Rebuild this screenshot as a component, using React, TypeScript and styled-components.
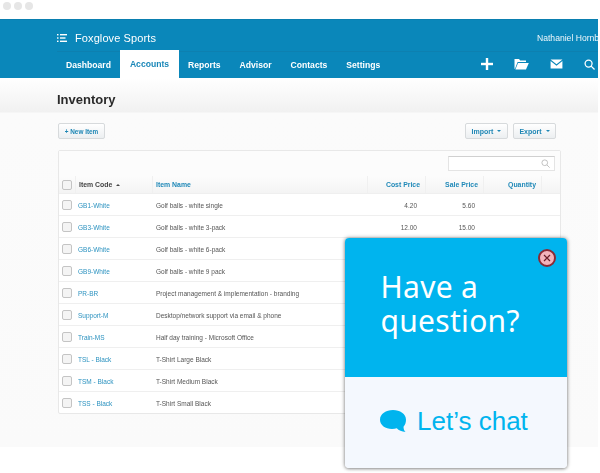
import React from "react";
import styled, { createGlobalStyle } from "styled-components";

const Global = createGlobalStyle`
  html, body { margin: 0; padding: 0; background: #fff; overflow: hidden; }
  body { font-family: "Liberation Sans", Arial, sans-serif; }
`;
const Stage = styled.div`position: relative; width: 600px; height: 473px; overflow: hidden; background: #fff;`;
const Page = styled.div`filter: blur(0.45px); width: 598px;`;
const WindowBar = styled.div`height: 19px; display: flex; gap: 3px; padding: 2px 0 0 3px; box-sizing: border-box; background: #fff;`;
const Dot = styled.span`width: 8px; height: 8px; border-radius: 50%; background: #e6e6e6;`;
const Header = styled.header`background: #0a87ba; height: 59px; display: flex; flex-direction: column; border-top: 1px solid #0a7fb0; box-sizing: border-box;`;
const BrandRow = styled.div`height: 33px; margin-left: 57px; display: flex; align-items: center; justify-content: space-between; border-bottom: 1px solid #0d80b0; box-sizing: border-box; padding-top: 5px; white-space: nowrap;`;
const Brand = styled.div`display: flex; align-items: center; gap: 8px; color: #fff; font-size: 11px; font-weight: 400; letter-spacing: 0.1px;`;
const User = styled.div`color: #eef7fb; font-size: 8.6px; width: 61px;`;
const NavRow = styled.nav`height: 26px; display: flex; align-items: stretch; padding-left: 56.5px;`;
const NavItem = styled.a<{ $active?: boolean }>`
  display: flex; align-items: center; justify-content: center; font-size: 8.6px; font-weight: 700; padding: 0 9.5px;
  color: ${p => p.$active ? "#1a87b8" : "#fff"}; background: ${p => p.$active ? "#fff" : "transparent"};
  margin-top: ${p => p.$active ? "-2px" : "0"};
`;
const NavIcons = styled.div`margin-left: auto; display: flex; align-items: center; color: #fff; padding-right: 3px; gap: 21px; margin-top: -2px;`;
const Main = styled.main`height: 369px; background: linear-gradient(#fff, #f1f1f1 34px, #fbfbfb 35px, #fafafa); padding: 0 37px 0 57px; box-sizing: border-box;`;
const Title = styled.h1`margin: 0; height: 37px; padding-top: 14px; box-sizing: border-box; font-size: 13px; font-weight: 700; line-height: 16px; color: #2a2a2a;`;
const Actions = styled.div`display: flex; padding: 8px 5px 0 1px; gap: 5px; height: 35px; box-sizing: border-box; align-items: flex-start;`;
const Btn = styled.button<{ $push?: boolean }>`
  font: 700 7px "Liberation Sans", sans-serif; height: 16px; padding: 0; color: #1f87b5; display: flex; align-items: center; justify-content: center; gap: 3px;
  width: 43px; border: 1px solid #d7dadc; border-radius: 2px; background: linear-gradient(#fff, #eceff1);
  margin-left: ${p => p.$push ? "auto" : "0"};
`;
const NewBtn = styled(Btn)`width: 47px; font-size: 6.4px;`;
const Caret = styled.i`border: 2px solid transparent; border-top: 2.5px solid #1f87b5; border-bottom: 0; display: inline-block; margin-left: 1px;`;
const Card = styled.section`width: 503px; background: #fff; border: 1px solid #e8e8e8; border-radius: 2px; box-sizing: border-box; margin-left: 1px;`;
const SearchRow = styled.div`height: 25px; background: #fcfcfc; display: flex; justify-content: flex-end; padding: 5px 5px 0 0; box-sizing: border-box;`;
const SearchBox = styled.div`width: 107px; height: 15px; border: 1px solid #e4e4e4; border-top-color: #d0d0d0; background: #fff; box-sizing: border-box; display: flex; align-items: center; justify-content: flex-end; padding-right: 4px; color: #c0c0c0;`;
const Row = styled.div<{ $head?: boolean }>`
  display: grid; grid-template-columns: 16px 77px 215px 58px 58px 58px 1fr; height: ${p => p.$head ? 18 : 22}px;
  border-bottom: 1px solid #efefef; box-sizing: border-box; align-items: center; font-size: ${p => p.$head ? 6.9 : 6.5}px; color: #555;
  ${p => p.$head ? "background: linear-gradient(#fcfcfc,#f4f4f4); font-weight:700;" : "padding-top:1px;"}
  &:last-child { border-bottom: 0; height: 21px; }
`;
const CheckCell = styled.div`display: flex; justify-content: center;`;
const Check = styled.span`width: 8px; height: 8px; border: 1px solid #c4c4c4; border-radius: 2px; background: #f4f4f4;`;
const CodeLink = styled.a`color: #2d93c0; padding-left: 3px;`;
const HeadCell = styled.div<{ $right?: boolean; $sorted?: boolean }>`
  height: 100%; display: flex; align-items: center; border-left: 1px solid #f0f0f0; box-sizing: border-box;
  padding: 0 ${p => p.$right ? 5 : 3}px 0 3px; color: ${p => p.$sorted ? "#444" : "#2089b8"}; justify-content: ${p => p.$right ? "flex-end" : "flex-start"};
`;
const Up = styled.i`border: 2px solid transparent; border-bottom: 2.5px solid #444; border-top: 0; margin-left: 4px;`;
const Name = styled.div`padding-left: 4px; white-space: nowrap;`;
const Num = styled.div`text-align: right; padding-right: 8px;`;
const Popup = styled.aside`position: absolute; left: 345px; top: 238px; width: 222px; height: 230px; border-radius: 4px; overflow: hidden; box-shadow: 0 0 4px rgba(0,0,0,.4), 0 1px 3px rgba(0,0,0,.25); display: flex; flex-direction: column;`;
const PopTop = styled.div`position: relative; height: 139px; background: #00b4ee; color: #fff; padding: 32px 0 0 35.5px; box-sizing: border-box;`;
const Question = styled.div`font-family: "Noto Sans", sans-serif; font-weight: 400; font-size: 30px; line-height: 34px; letter-spacing: 0.3px;`;
const Close = styled.button`position: absolute; top: 11px; right: 11px; width: 18px; height: 18px; padding: 0; border-radius: 50%; background: #f3b3bb; border: 2px solid #8a2a35; display: flex; align-items: center; justify-content: center; box-sizing: border-box; color: #6b1f2a;`;
const PopBottom = styled.div`flex: 1; background: #f4f8fe; color: #00b4ee; display: flex; align-items: center; gap: 11px; padding: 0 0 2px 35px; font-size: 26px; font-weight: 400;`;

const rows = [
  ["GB1-White", "Golf balls - white single", "4.20", "5.60"],
  ["GB3-White", "Golf balls - white 3-pack", "12.00", "15.00"],
  ["GB6-White", "Golf balls - white 6-pack", "", ""],
  ["GB9-White", "Golf balls - white 9 pack", "", ""],
  ["PR-BR", "Project management & implementation - branding", "", ""],
  ["Support-M", "Desktop/network support via email & phone", "", ""],
  ["Train-MS", "Half day training - Microsoft Office", "", ""],
  ["TSL - Black", "T-Shirt Large Black", "", ""],
  ["TSM - Black", "T-Shirt Medium Black", "", ""],
  ["TSS - Black", "T-Shirt Small Black", "", ""],
];
const navs = ["Dashboard", "Accounts", "Reports", "Advisor", "Contacts", "Settings"];

const Mag = ({ s = 11, w = 1.4 }: { s?: number; w?: number }) => (
  <svg width={s} height={s} viewBox="0 0 12 12" fill="none" stroke="currentColor" strokeWidth={w}>
    <circle cx="5" cy="5" r="3.8" /><path d="M7.8 7.8 11.500 11.500" />
  </svg>
);

export default function App() {
  return (
    <Stage>
      <Global />
      <Page>
        <WindowBar><Dot /><Dot /><Dot /></WindowBar>
        <Header>
          <BrandRow>
            <Brand>
              <svg width="10" height="8" viewBox="0 0 10 8" fill="#fff"><rect x="0" y="0" width="1.5" height="1.4" /><rect x="0" y="3.3" width="1.5" height="1.4" /><rect x="0" y="6.6" width="1.5" height="1.4" /><rect x="3" y="0" width="7" height="1.4" /><rect x="3" y="3.3" width="5.5" height="1.4" /><rect x="3" y="6.6" width="7" height="1.4" /></svg>
              <span>Foxglove Sports</span>
            </Brand>
            <User>Nathaniel Hornbl</User>
          </BrandRow>
          <NavRow>
            {navs.map(n => <NavItem key={n} $active={n === "Accounts"}>{n}</NavItem>)}
            <NavIcons>
              <svg width="12" height="12" viewBox="0 0 12 12" fill="#fff"><rect x="4.800" y="0" width="2.400" height="12" /><rect x="0" y="4.800" width="12" height="2.400" /></svg>
              <svg width="15" height="12" viewBox="0 0 15 12" fill="#fff"><path d="M0.5 10.5V1h4.500l1.200 1.500H12v1.400H3.600L0.900 11z" /><path d="M4 5h10.800l-2.800 6.500H1.400z" /></svg>
              <svg width="13" height="10" viewBox="0 0 14 11" fill="#fff"><path d="M0.500 0.500h13L7 5.800z" /><path d="M0.500 2.200 7 7.400l6.500-5.200v8.300H.5z" /></svg>
              <Mag />
            </NavIcons>
          </NavRow>
        </Header>
        <Main>
          <Title>Inventory</Title>
          <Actions>
            <NewBtn>+ New Item</NewBtn>
            <Btn $push>Import <Caret /></Btn>
            <Btn>Export <Caret /></Btn>
          </Actions>
          <Card>
            <SearchRow><SearchBox><Mag s={9} w={1.3} /></SearchBox></SearchRow>
            <Row $head>
              <CheckCell><Check /></CheckCell>
              <HeadCell $sorted>Item Code <Up /></HeadCell>
              <HeadCell>Item Name</HeadCell>
              <HeadCell $right>Cost Price</HeadCell>
              <HeadCell $right>Sale Price</HeadCell>
              <HeadCell $right>Quantity</HeadCell>
              <HeadCell />
            </Row>
            {rows.map(r => (
              <Row key={r[0]}>
                <CheckCell><Check /></CheckCell>
                <CodeLink>{r[0]}</CodeLink>
                <Name>{r[1]}</Name>
                <Num>{r[2]}</Num>
                <Num>{r[3]}</Num>
              </Row>
            ))}
          </Card>
        </Main>
      </Page>
      <Popup>
        <PopTop>
          <Question>Have a<br />question?</Question>
          <Close aria-label="Close"><svg width="8" height="8" viewBox="0 0 8 8" stroke="currentColor" strokeWidth="1.2"><path d="M1 1l6 6M7 1 1 7" /></svg></Close>
        </PopTop>
        <PopBottom>
          <svg width="26" height="23" viewBox="0 0 26 23" fill="#00b4ee"><path d="M13 0C6 0 0 3.900 0 9.700c0 5.300 5.400 9.300 12 9.300 1.800 0 3.300-.2 4.800-.7 1.800 2 5 3.600 8.700 3.700-1.300-1.200-2-3-2-5.200 1.600-1.800 2.500-4.400 2.500-7.100C26 3.900 20 0 13 0z" /></svg>
          <span>Let’s chat</span>
        </PopBottom>
      </Popup>
    </Stage>
  );
}
